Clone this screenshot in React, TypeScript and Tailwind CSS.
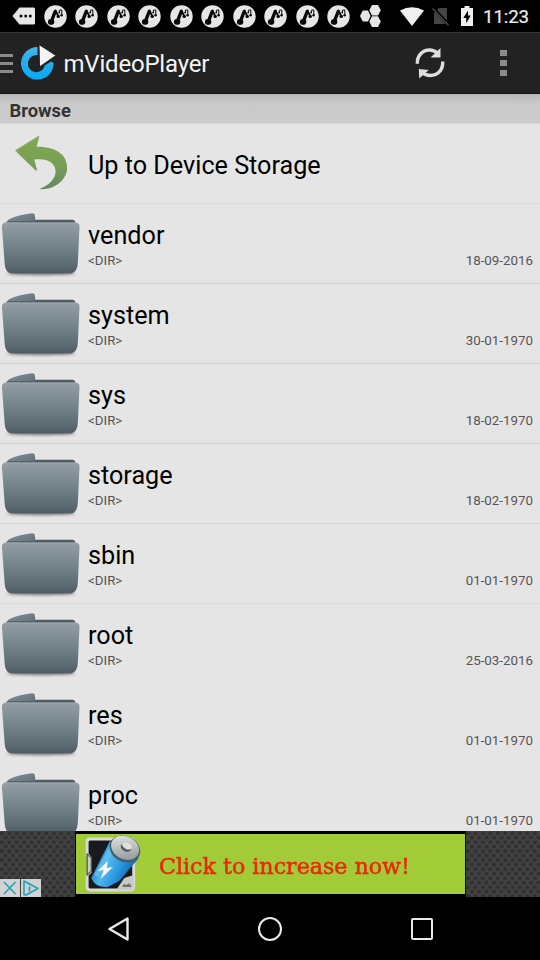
import React from "react";

const entries = [
  { name: "vendor", date: "18-09-2016", line: "border-[#cfcfcf]" },
  { name: "system", date: "30-01-1970", line: "border-[#cfcfcf]" },
  { name: "sys", date: "18-02-1970", line: "border-[#cfcfcf]" },
  { name: "storage", date: "18-02-1970", line: "border-[#d2d2d2]" },
  { name: "sbin", date: "01-01-1970", line: "border-[#dcdcdc]" },
  { name: "root", date: "25-03-2016", line: "border-[#e4e4e4]" },
  { name: "res", date: "01-01-1970", line: "border-[#e4e4e4]" },
  { name: "proc", date: "01-01-1970", line: "border-[#e4e4e4]" },
];

function NoteBadge() {
  return (
    <svg className="h-[23px] w-[23px] shrink-0" viewBox="0 0 23 23">
      <circle cx="11.5" cy="11.5" r="11.2" fill="#e6e6e6" />
      <path d="M7.4 16.4 L11.2 6.5" fill="none" stroke="#080808" strokeWidth="3.4" strokeLinecap="round" />
      <path d="M11.6 5.6 L14 10.6" fill="none" stroke="#080808" strokeWidth="1.9" strokeLinecap="round" />
      <ellipse cx="7.1" cy="16.9" rx="3.2" ry="2.8" fill="#080808" />
      <circle cx="14.2" cy="11.4" r="1.7" fill="#080808" />
      <path d="M15.4 8 V5.2 L17.8 4.9 V10" fill="none" stroke="#080808" strokeWidth="1" />
      <circle cx="15.2" cy="7.6" r=".9" fill="#080808" />
      <circle cx="17.6" cy="10.2" r="1.2" fill="#080808" />
    </svg>
  );
}

function StatusBar() {
  return (
    <div className="flex h-8 shrink-0 items-center bg-black pl-[12px] pr-[10px]">
      <svg className="h-[18px] w-[23px] shrink-0" viewBox="0 0 23 18">
        <path d="M7.5 0.5 H21.5 Q23 .5 23 2 V16 Q23 17.5 21.5 17.5 H7.5 L0.5 9 Z" fill="#e6e6e6" />
        <g fill="#080808">
          <circle cx="9" cy="9" r="1.5" />
          <circle cx="13.7" cy="9" r="1.5" />
          <circle cx="18.3" cy="9" r="1.5" />
        </g>
      </svg>
      <div className="ml-[8.5px] flex shrink-0 gap-[8.5px]">
        {Array.from({ length: 10 }, (_, i) => (
          <NoteBadge key={i} />
        ))}
      </div>
      <svg className="ml-[9.5px] h-[22px] w-[21px] shrink-0" viewBox="0 0 21 22">
        <g fill="#e6e6e6">
          <path d="M0 11 L2.8 5.6 H8 L10.6 11 L8 16.4 H2.8 Z" />
          <path d="M9.3 5.3 L12 0 H18 L20.8 5.3 L18 10.6 H12 Z" />
          <path d="M9.3 16.6 L12 11.3 H18 L20.8 16.6 L18 22 H12 Z" />
        </g>
      </svg>
      <svg className="ml-auto h-[19px] w-[24px] shrink-0" viewBox="0 0 24 19">
        <path d="M0 3.6 Q12 -3 24 3.6 L12 19 Z" fill="#f0f0f0" />
      </svg>
      <svg className="ml-[8px] h-[20px] w-[18px] shrink-0" viewBox="0 0 18 20">
        <path d="M7 2 H15 V18 H2 V7 Z" fill="#444" />
        <path d="M1 2 L17 19" stroke="#000" strokeWidth="3" />
        <path d="M.5 2.5 L16.5 19.3" stroke="#484848" strokeWidth="1.4" />
      </svg>
      <svg className="ml-[11px] h-[20px] w-[12px] shrink-0" viewBox="0 0 12 20">
        <path d="M3.5 0 H8.5 V2 H12 V20 H0 V2 H3.5 Z" fill="#f0f0f0" />
        <path d="M7 4.5 L2.3 12 H5.2 V17.3 L9.8 9.6 H7 Z" fill="#000" />
      </svg>
      <span className="ml-[10px] w-[47px] whitespace-nowrap pt-px text-[18.67px] leading-8 tracking-[-0.1px] text-[#ececec] [-webkit-text-stroke:0.2px_#ececec]">11:23</span>
    </div>
  );
}

function ActionBar() {
  return (
    <div className="flex h-[62px] shrink-0 items-center border-b border-t border-b-[#151515] border-t-[#383838] bg-[#222]">
      <div className="flex w-[13px] flex-col gap-[5px] pt-px">
        <div className="h-[3px] bg-[#8b8b8b]" />
        <div className="h-[3px] bg-[#8b8b8b]" />
        <div className="h-[3px] bg-[#8b8b8b]" />
      </div>
      <svg className="ml-[7px] h-[38px] w-[36px]" viewBox="0 0 36 38">
        <defs>
          <linearGradient id="ring" x1="0" y1="0" x2="0" y2="1">
            <stop offset="0" stopColor="#45b2e8" />
            <stop offset="1" stopColor="#05a9f4" />
          </linearGradient>
        </defs>
        <path d="M17.5 3 A16.3 16.3 0 1 0 33.6 19 L31 17.5 L24.8 21.5 A8.6 8.6 0 1 1 17.5 11 Z" fill="url(#ring)" />
        <path d="M19 0.5 L36 11.5 L19.5 23 Z" fill="#f3f3f3" stroke="#222" strokeWidth="1" />
      </svg>
      <span className="ml-[7.5px] pt-[2px] text-[24px] tracking-[-0.2px] text-[#f4f4f4]">mVideoPlayer</span>
      <svg className="ml-auto h-[32px] w-[30px]" viewBox="0 0 30 32">
        <g fill="none" stroke="#dedede" strokeWidth="3.4">
          <path d="M2.3 16.7 C2 8.5 7.8 3 14.5 3 C17.7 3 20.5 4.3 22.8 6.3" />
          <path d="M27.7 14.5 C28.2 23 22.5 28.5 15.5 28.5 C12.3 28.5 9.2 27.3 7 25.2" />
        </g>
        <path d="M25.5 1 V10.5 H15.5 Z M4.2 31.5 L3.8 22 L13.8 23 Z" fill="#dedede" />
      </svg>
      <div className="ml-[55px] mr-[33px] flex w-[7px] flex-col gap-[4px]">
        <div className="h-[6px] bg-[#8b8b8b]" />
        <div className="h-[6px] bg-[#8b8b8b]" />
        <div className="h-[6px] bg-[#8b8b8b]" />
      </div>
    </div>
  );
}

function FolderIcon() {
  return (
    <svg className="h-[79px] w-[80px] shrink-0" viewBox="0 0 80 79">
      <defs>
        <linearGradient id="folder" x1="0" y1="0" x2="0" y2="1">
          <stop offset="0" stopColor="#939da5" />
          <stop offset=".48" stopColor="#74828a" />
          <stop offset=".87" stopColor="#59676f" />
          <stop offset="1" stopColor="#4f5b62" />
        </linearGradient>
        <linearGradient id="tab" x1="0" y1="0" x2="1" y2="1">
          <stop offset="0" stopColor="#84929b" />
          <stop offset="1" stopColor="#5f6d76" />
        </linearGradient>
        <filter id="shade" x="-10%" y="-200%" width="120%" height="500%">
          <feGaussianBlur stdDeviation="1.6" />
        </filter>
      </defs>
      <ellipse cx="41" cy="69" rx="34" ry="2.3" fill="#444" opacity=".65" filter="url(#shade)" />
      <path d="M35 15.8 H73 Q75 16 75.5 19 H35 Z" fill="#4e5b66" />
      <path d="M6.5 19 Q7 16.2 10 14.8 Q18 10.8 32 9.2 Q34.5 9 34.8 11 L35.5 17 V19 Z" fill="url(#tab)" />
      <path d="M7 17 H74.5 L75.5 19.5 H6.5 Z" fill="#4e5b64" opacity=".75" />
      <path d="M6 18.6 H75.5 Q79.8 19 79.5 23 L77.8 59 Q77.3 68.5 71 69.5 H12 Q5.3 69 4.7 60 L2 24 Q1.5 18.8 6 18.6 Z" fill="url(#folder)" />
      <path d="M6 19.1 H75.5" stroke="#a0a9b0" strokeWidth="1" />
    </svg>
  );
}

function UpArrow() {
  return (
    <svg className="h-[80px] w-[80px] shrink-0" viewBox="0 0 80 79">
      <defs>
        <linearGradient id="leaf" x1="0" y1="0" x2="0" y2="1">
          <stop offset="0" stopColor="#80a94e" />
          <stop offset=".55" stopColor="#789e57" />
          <stop offset="1" stopColor="#67885f" />
        </linearGradient>
      </defs>
      <path d="M39.5 11 L15 26 L36 46.3 C37 46.8 37.2 44.5 36.4 43 L34.2 35 C48 33.5 54.3 38.2 55.5 45.5 C56.7 54.5 47.5 61.2 39.7 64.5 C50.5 66 64.5 58.5 67 46 C68.8 31 56.5 21.7 36.6 22.2 Z" fill="url(#leaf)" />
      <path d="M39 11.5 L15.5 26 L18 28" fill="none" stroke="#99ba6f" strokeWidth="1" />
    </svg>
  );
}

function BatteryPicture() {
  return (
    <svg className="ml-[7px] h-[60px] w-[60px] shrink-0" viewBox="0 0 58 60" preserveAspectRatio="none">
      <defs>
        <linearGradient id="cell" x1="0" y1=".3" x2="1" y2=".75">
          <stop offset="0" stopColor="#0c65ae" />
          <stop offset=".35" stopColor="#51b7ef" />
          <stop offset=".6" stopColor="#2996df" />
          <stop offset="1" stopColor="#0a4c93" />
        </linearGradient>
        <linearGradient id="cap" x1="0" y1="0" x2="1" y2="1">
          <stop offset="0" stopColor="#eeeeea" />
          <stop offset="1" stopColor="#858c90" />
        </linearGradient>
      </defs>
      <path d="M7 5 H46 Q49 5 49 8 V53 Q49 56 46 56 H7 Q4 56 4 53 V41 L7 38 V24 L4 20 V8 Q4 5 7 5 Z" fill="#171b1d" stroke="#dadbd4" strokeWidth="2.8" />
      <path d="M4 20 L8 24 V37 L4 41 Z" fill="#c9cbc8" stroke="#3b4042" strokeWidth="1" />
      <path d="M32 56 L40 44 L49 41 V53 Q49 56 46 56 Z" fill="#c7cac5" />
      <path d="M38 53 Q39 48 42 51 Q45 47 47 53 Z" fill="#6e7670" />
      <path d="M26 7 L8 44 Q12 54 24 53 L35 47 L54 24 Z" fill="url(#cell)" />
      <path d="M29 11 L13 42" stroke="#6fc9f4" strokeWidth="5" opacity=".6" />
      <ellipse cx="40.5" cy="15" rx="15.5" ry="12.8" transform="rotate(31 40.5 15)" fill="#42616b" />
      <ellipse cx="40.7" cy="13.8" rx="14.2" ry="11.3" transform="rotate(31 40.7 13.8)" fill="url(#cap)" />
      <ellipse cx="41.5" cy="13.7" rx="5.4" ry="3.8" transform="rotate(28 41.5 13.7)" fill="#555c5f" />
      <ellipse cx="42.5" cy="12" rx="5" ry="3.1" transform="rotate(28 42.5 12)" fill="#dfe1dd" />
      <path d="M24 27 L14 37 L20 36 L17 45 L29 33 L23 34 Z" fill="#edf9ff" />
    </svg>
  );
}

function AdBanner() {
  return (
    <div className="relative flex h-[66px] shrink-0 bg-black">
      <svg className="absolute inset-0 h-full w-full">
        <defs>
          <pattern id="mesh" width="7.4" height="9" patternUnits="userSpaceOnUse">
            <rect width="7.4" height="9" fill="#414141" />
            <circle cx="1.9" cy="2.2" r="1.9" fill="#2f2f2f" />
            <circle cx="5.6" cy="6.7" r="1.9" fill="#2f2f2f" />
          </pattern>
        </defs>
        <rect width="540" height="66" fill="url(#mesh)" />
      </svg>
      <div className="relative ml-[75px] flex w-[391px] border-x border-b-[3px] border-t-[3px] border-black bg-[#a2cb38]">
        <BatteryPicture />
        <span className="ml-[16px] origin-left scale-x-[1.007] whitespace-nowrap pt-[2px] font-['DejaVu_Serif',serif] text-[22px] leading-[61px] text-[#e92708] [-webkit-text-stroke:0.5px_#e92708]">Click to increase now!</span>
      </div>
      <div className="absolute bottom-0 left-0 flex gap-px">
        <svg className="h-[18px] w-[20px] bg-[#d2d2d2]" viewBox="0 0 20 18">
          <path d="M4 3 L15.5 15 M15.5 3 L4 15" stroke="#20a2b8" strokeWidth="1.6" />
        </svg>
        <svg className="h-[18px] w-[20px] bg-[#d2d2d2]" viewBox="0 0 20 18">
          <path d="M3 2.5 V15.5 L5 16 L17 9.5 L3 2 Z" fill="none" stroke="#20a2b8" strokeWidth="1.6" strokeLinejoin="round" />
          <path d="M8.5 7.5 V12.5 M8.5 4.6 V6" stroke="#20a2b8" strokeWidth="1.7" />
        </svg>
      </div>
    </div>
  );
}

function NavBar() {
  return (
    <div className="flex h-[63px] shrink-0 items-center bg-black pl-[106.5px] pr-[107px]">
      <svg className="h-[26px] w-[23px]" viewBox="0 0 23 26">
        <path d="M20.5 2.5 V23.5 L2.5 13 Z" fill="none" stroke="#ebebeb" strokeWidth="2.4" strokeLinejoin="round" />
      </svg>
      <div className="ml-[128.5px] h-[24px] w-[24px] rounded-full border-[2.5px] border-[#ebebeb]" />
      <div className="ml-auto h-[22px] w-[22px] rounded-[2px] border-[2.5px] border-[#ebebeb]" />
    </div>
  );
}

export default function App() {
  return (
    <div className="flex h-[960px] w-[540px] flex-col overflow-hidden bg-[#e5e5e5] font-[Roboto,sans-serif]">
      <StatusBar />
      <ActionBar />
      <div className="flex h-[30px] shrink-0 items-center border-b border-[#dadada] bg-linear-to-b from-[#b5b5b5] via-[#c9c9c9] via-30% to-[#cdcdcd] pl-[9.5px] pt-[4px] text-[18.4px] font-bold text-[#333]">Browse</div>
      <div className="min-h-0 flex-1 overflow-hidden">
        <div className="flex h-20 items-center border-b border-[#dcdcdc]">
          <UpArrow />
          <span className="ml-2 pt-[4px] text-[25.2px] text-black">Up to Device Storage</span>
        </div>
        {entries.map((entry) => (
          <div key={entry.name} className={"flex h-20 border-b " + entry.line}>
            <FolderIcon />
            <div className="ml-2 mr-[7px] flex-1 pt-[17px]">
              <div className="text-[25.2px] leading-[30px] text-black">{entry.name}</div>
              <div className="mt-[2px] flex justify-between text-[13.33px] leading-4 text-[#555]">
                <span>&lt;DIR&gt;</span>
                <span>{entry.date}</span>
              </div>
            </div>
          </div>
        ))}
      </div>
      <AdBanner />
      <NavBar />
    </div>
  );
}
